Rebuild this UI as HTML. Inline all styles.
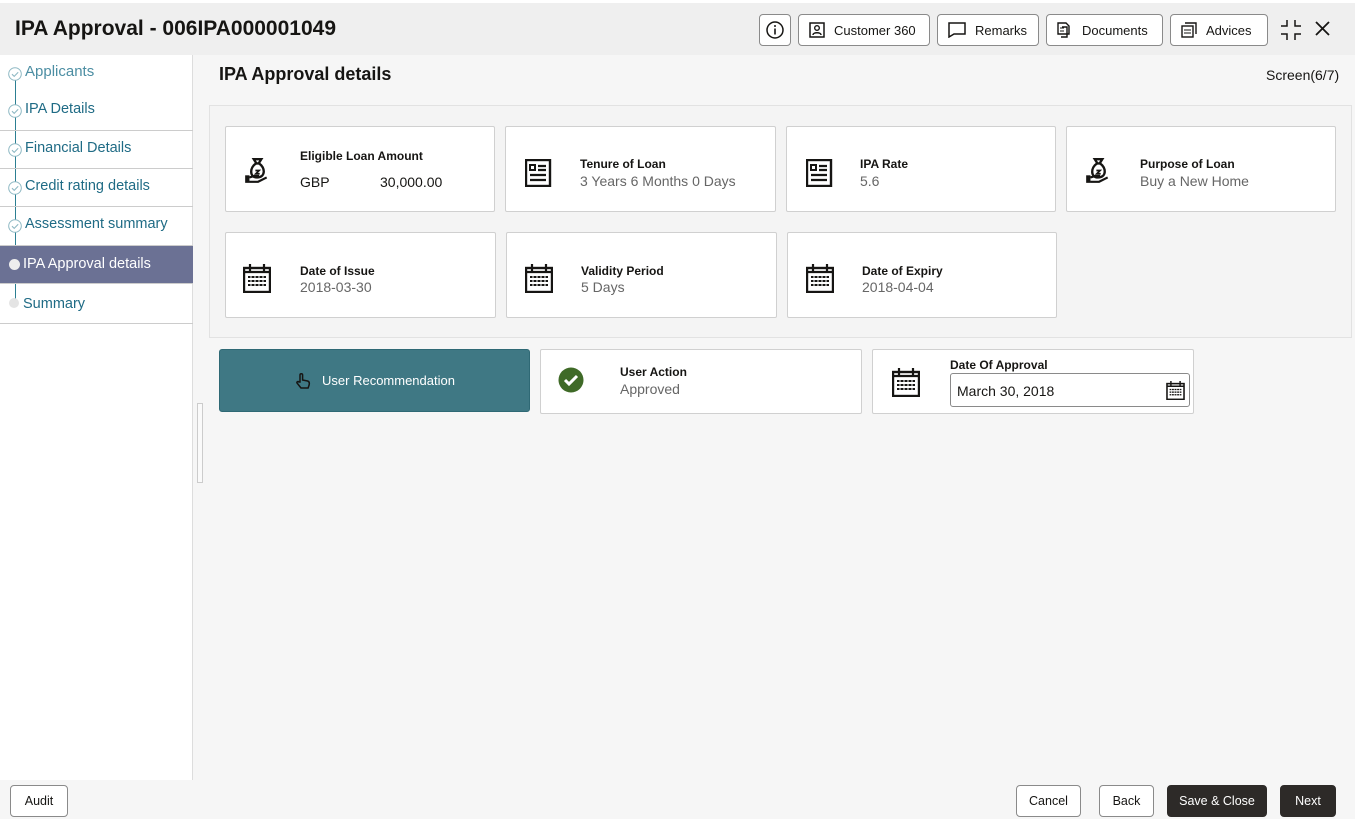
<!DOCTYPE html>
<html><head><meta charset="utf-8"><style>
*{box-sizing:border-box;margin:0;padding:0}
body{width:1355px;height:819px;overflow:hidden;font-family:"Liberation Sans",sans-serif;background:#f6f6f6;position:relative;color:#161513}
.hdr{position:absolute;left:0;top:0;width:1355px;height:55px;background:#efefef;border-top:3px solid #fff}
.title{position:absolute;left:15px;top:14px;font-size:21px;font-weight:bold;color:#161513}
.hb{position:absolute;top:11px;height:32px;border:1px solid #8a8a8a;border-radius:4px;background:#fff;font-size:13px;display:flex;align-items:center;padding-left:10px;gap:9px}
.side{position:absolute;left:0;top:55px;width:193px;height:725px;background:#fff;border-right:1px solid #ddd}
.nav{position:absolute;left:0;width:193px;font-size:14.5px;color:#1f6b85;padding-left:25px}
.nav.b{border-bottom:1px solid #ccc}
.line{position:absolute;left:15px;top:72px;width:1px;height:230px;background:#2c7f92}
.ck{position:absolute;left:8px;width:14px;height:14px}
.panel{position:absolute;left:209px;top:105px;width:1143px;height:233px;background:#f4f4f4;border:1px solid #e2e2e2}
.card{position:absolute;background:#fff;border:1px solid #d0d0d0;border-radius:2px}
.lbl{position:absolute;font-size:12px;font-weight:bold}
.val{position:absolute;font-size:14px;color:#666}
.ic{position:absolute}
.fb{position:absolute;top:785px;height:32px;border:1px solid #8a8a8a;border-radius:4px;background:#fff;font-size:12.5px;display:flex;align-items:center;justify-content:center}
.fb.d{background:#2d2a28;color:#fff;border-color:#2d2a28}
</style></head><body>
<div class="hdr"><div class="title">IPA Approval - 006IPA000001049</div>
<div class="hb" style="left:759px;width:32px;padding:0;justify-content:center"><svg width="18" height="18"><circle cx="9" cy="9" r="8" fill="none" stroke="#161513" stroke-width="1.5"/><rect x="8.2" y="7.5" width="1.6" height="6" fill="#161513"/><circle cx="9" cy="5" r="1" fill="#161513"/></svg></div>
<div class="hb" style="left:798px;width:132px"><svg width="16" height="16"><rect x="1" y="1" width="14" height="14" fill="none" stroke="#161513" stroke-width="1.5"/><circle cx="8" cy="6" r="2.3" fill="none" stroke="#161513" stroke-width="1.4"/><path d="M4 13c0-3 8-3 8 0" fill="none" stroke="#161513" stroke-width="1.4"/></svg>Customer 360</div>
<div class="hb" style="left:937px;width:102px"><svg width="18" height="16"><path d="M1 1h16v11H6l-5 3z" fill="none" stroke="#161513" stroke-width="1.5"/></svg>Remarks</div>
<div class="hb" style="left:1046px;width:117px"><svg width="16" height="16"><path d="M1 1h8l3 3v8H1z M5 5h5v10H4" fill="none" stroke="#161513" stroke-width="1.4"/><path d="M3 6h4M3 9h4" stroke="#161513"/></svg>Documents</div>
<div class="hb" style="left:1170px;width:98px"><svg width="16" height="16"><rect x="1" y="4" width="11" height="11" fill="none" stroke="#161513" stroke-width="1.4"/><path d="M4 1h11v11" fill="none" stroke="#161513" stroke-width="1.4"/><path d="M3 8h7M3 11h7" stroke="#161513"/></svg>Advices</div>
<svg style="position:absolute;left:1280px;top:16px" width="22" height="22"><path d="M7 1v6H1M15 1v6h6M7 21v-6H1M15 21v-6h6" fill="none" stroke="#161513" stroke-width="1.5"/></svg>
<svg style="position:absolute;left:1315px;top:18px" width="15" height="15"><path d="M1 1l13 13M14 1L1 14" stroke="#161513" stroke-width="1.8"/></svg>
</div>
<div class="side">
</div>
<div class="line"></div>
<div class="nav" style="top:63px;height:33px;color:#4c8ea3;font-size:15px">Applicants</div>
<div class="nav b" style="top:96px;height:35px;padding-top:5px">IPA Details</div>
<div class="nav b" style="top:131px;height:38px;padding-top:9px">Financial Details</div>
<div class="nav b" style="top:169px;height:38px;padding-top:9px">Credit rating details</div>
<div class="nav b" style="top:207px;height:39px;padding-top:9px">Assessment summary</div>
<div class="nav" style="top:246px;height:38px;padding-top:10px;background:#6b7194;color:#fff;padding-left:23px;border-bottom:1px solid #ccc">IPA Approval details</div>
<div class="nav b" style="top:284px;height:40px;padding-top:12px;padding-left:23px">Summary</div>
<svg width="0" height="0" style="position:absolute"><defs>
<g id="chk"><circle cx="7" cy="7" r="6.3" fill="#fff" stroke="#8fb9c4" stroke-width="1"/><path d="M4 7.2l2.2 2.2 4-4.2" fill="none" stroke="#8fb9c4" stroke-width="1.1"/></g>
<g id="bag"><path d="M10 2h7l-2.5 4h-2z" fill="none" stroke="#161513" stroke-width="2.2"/><path d="M12 6C6 10 6 19 13 19C21 19 21 10 15 6" fill="none" stroke="#161513" stroke-width="2.2"/><path d="M11.5 12.5h3.5l-3 3h3.5" fill="none" stroke="#161513" stroke-width="1.6"/><rect x="2" y="17" width="4" height="7" fill="#161513"/><path d="M6 19l5-1.5h4M6 23h8l8-4" fill="none" stroke="#161513" stroke-width="2"/></g>
<g id="doc"><rect x="1" y="1" width="24" height="26" fill="none" stroke="#161513" stroke-width="2.4"/><rect x="5" y="6" width="5" height="5" fill="none" stroke="#161513" stroke-width="2"/><path d="M13 7h8M13 11h8M5 16h16M5 21h16" stroke="#161513" stroke-width="2.2"/></g>
<g id="cal"><rect x="1" y="4" width="26" height="24" fill="none" stroke="#161513" stroke-width="2.4"/><path d="M7 0v7M21 0v7M1 8h26" stroke="#161513" stroke-width="2.2"/><g fill="#161513"><rect x="5" y="12" width="18" height="2"/><rect x="5" y="16" width="18" height="2"/><rect x="5" y="20" width="18" height="2"/></g><path d="M8 11v12M12 11v12M16 11v12M20 11v12" stroke="#fff" stroke-width="1"/></g>
</defs></svg>
<svg class="ck" style="top:67px"><use href="#chk"/></svg><svg class="ck" style="top:104px"><use href="#chk"/></svg><svg class="ck" style="top:143px"><use href="#chk"/></svg><svg class="ck" style="top:181px"><use href="#chk"/></svg><svg class="ck" style="top:219px"><use href="#chk"/></svg>
<div style="position:absolute;left:9px;top:259px;width:11px;height:11px;border-radius:50%;background:#eee"></div>
<div style="position:absolute;left:9px;top:298px;width:10px;height:10px;border-radius:50%;background:#e4e4e4"></div>
<div style="position:absolute;left:197px;top:403px;width:6px;height:80px;border:1px solid #ccc;background:#fafafa"></div>

<div style="position:absolute;left:219px;top:64px;font-size:18px;font-weight:bold">IPA Approval details</div>
<div style="position:absolute;left:1266px;top:67px;font-size:14px">Screen(6/7)</div>
<div class="panel"></div>

<div class="card" style="left:225px;top:126px;width:270px;height:86px"><svg class="ic" style="left:17px;top:30px" width="28" height="28" viewBox="0 0 26 26"><use href="#bag"/></svg><div class="lbl" style="left:74px;top:22px">Eligible Loan Amount</div><div class="val" style="left:74px;top:47px;color:#161513">GBP</div><div class="val" style="left:154px;top:47px;color:#161513">30,000.00</div></div>
<div class="card" style="left:505px;top:126px;width:271px;height:86px"><svg class="ic" style="left:19px;top:32px" width="27" height="28"><use href="#doc"/></svg><div class="lbl" style="left:74px;top:30px">Tenure of Loan</div><div class="val" style="left:74px;top:46px">3 Years 6 Months 0 Days</div></div>
<div class="card" style="left:786px;top:126px;width:270px;height:86px"><svg class="ic" style="left:19px;top:32px" width="27" height="28"><use href="#doc"/></svg><div class="lbl" style="left:73px;top:30px">IPA Rate</div><div class="val" style="left:73px;top:46px">5.6</div></div>
<div class="card" style="left:1066px;top:126px;width:270px;height:86px"><svg class="ic" style="left:17px;top:30px" width="28" height="28" viewBox="0 0 26 26"><use href="#bag"/></svg><div class="lbl" style="left:73px;top:30px">Purpose of Loan</div><div class="val" style="left:73px;top:46px">Buy a New Home</div></div>
<div class="card" style="left:225px;top:232px;width:271px;height:86px"><svg class="ic" style="left:17px;top:31px" width="28" height="29"><use href="#cal"/></svg><div class="lbl" style="left:74px;top:31px">Date of Issue</div><div class="val" style="left:74px;top:46px">2018-03-30</div></div>
<div class="card" style="left:506px;top:232px;width:271px;height:86px"><svg class="ic" style="left:18px;top:31px" width="28" height="29"><use href="#cal"/></svg><div class="lbl" style="left:74px;top:31px">Validity Period</div><div class="val" style="left:74px;top:46px">5 Days</div></div>
<div class="card" style="left:787px;top:232px;width:270px;height:86px"><svg class="ic" style="left:18px;top:31px" width="28" height="29"><use href="#cal"/></svg><div class="lbl" style="left:74px;top:31px">Date of Expiry</div><div class="val" style="left:74px;top:46px">2018-04-04</div></div>

<div style="position:absolute;left:219px;top:349px;width:311px;height:63px;background:#3f7884;border:1px solid #2f6975;border-radius:3px;color:#fff;font-size:13px;display:flex;align-items:center;justify-content:center;gap:10px"><svg width="18" height="18"><path d="M6 10V3a1.3 1.3 0 0 1 2.6 0v5l5 1c2 .5 2 2 1.5 4l-1 3H7l-4-5c-.6-1 .8-2 2-1z" fill="none" stroke="#161513" stroke-width="1.5"/></svg>User Recommendation</div>
<div class="card" style="left:540px;top:349px;width:322px;height:65px"><svg class="ic" style="left:17px;top:17px" width="26" height="26"><circle cx="13" cy="13" r="12.5" fill="#3f6a27"/><path d="M7 13l4 4 8-8" fill="none" stroke="#fff" stroke-width="3"/></svg><div class="lbl" style="left:79px;top:15px">User Action</div><div class="val" style="left:79px;top:31px">Approved</div></div>
<div class="card" style="left:872px;top:349px;width:322px;height:65px"><svg class="ic" style="left:19px;top:18px" width="28" height="29"><use href="#cal"/></svg><div class="lbl" style="left:77px;top:8px">Date Of Approval</div>
<div style="position:absolute;left:77px;top:23px;width:240px;height:34px;border:1px solid #8a8a8a;border-radius:3px;font-size:14px;padding:9px 0 0 6px">March 30, 2018<svg style="position:absolute;right:4px;top:7px" width="19" height="19" viewBox="0 0 28 29"><use href="#cal"/></svg></div></div>

<div class="fb" style="left:10px;width:58px">Audit</div>
<div class="fb" style="left:1016px;width:65px">Cancel</div>
<div class="fb" style="left:1099px;width:55px">Back</div>
<div class="fb d" style="left:1167px;width:100px">Save &amp; Close</div>
<div class="fb d" style="left:1280px;width:56px">Next</div>
</body></html>
